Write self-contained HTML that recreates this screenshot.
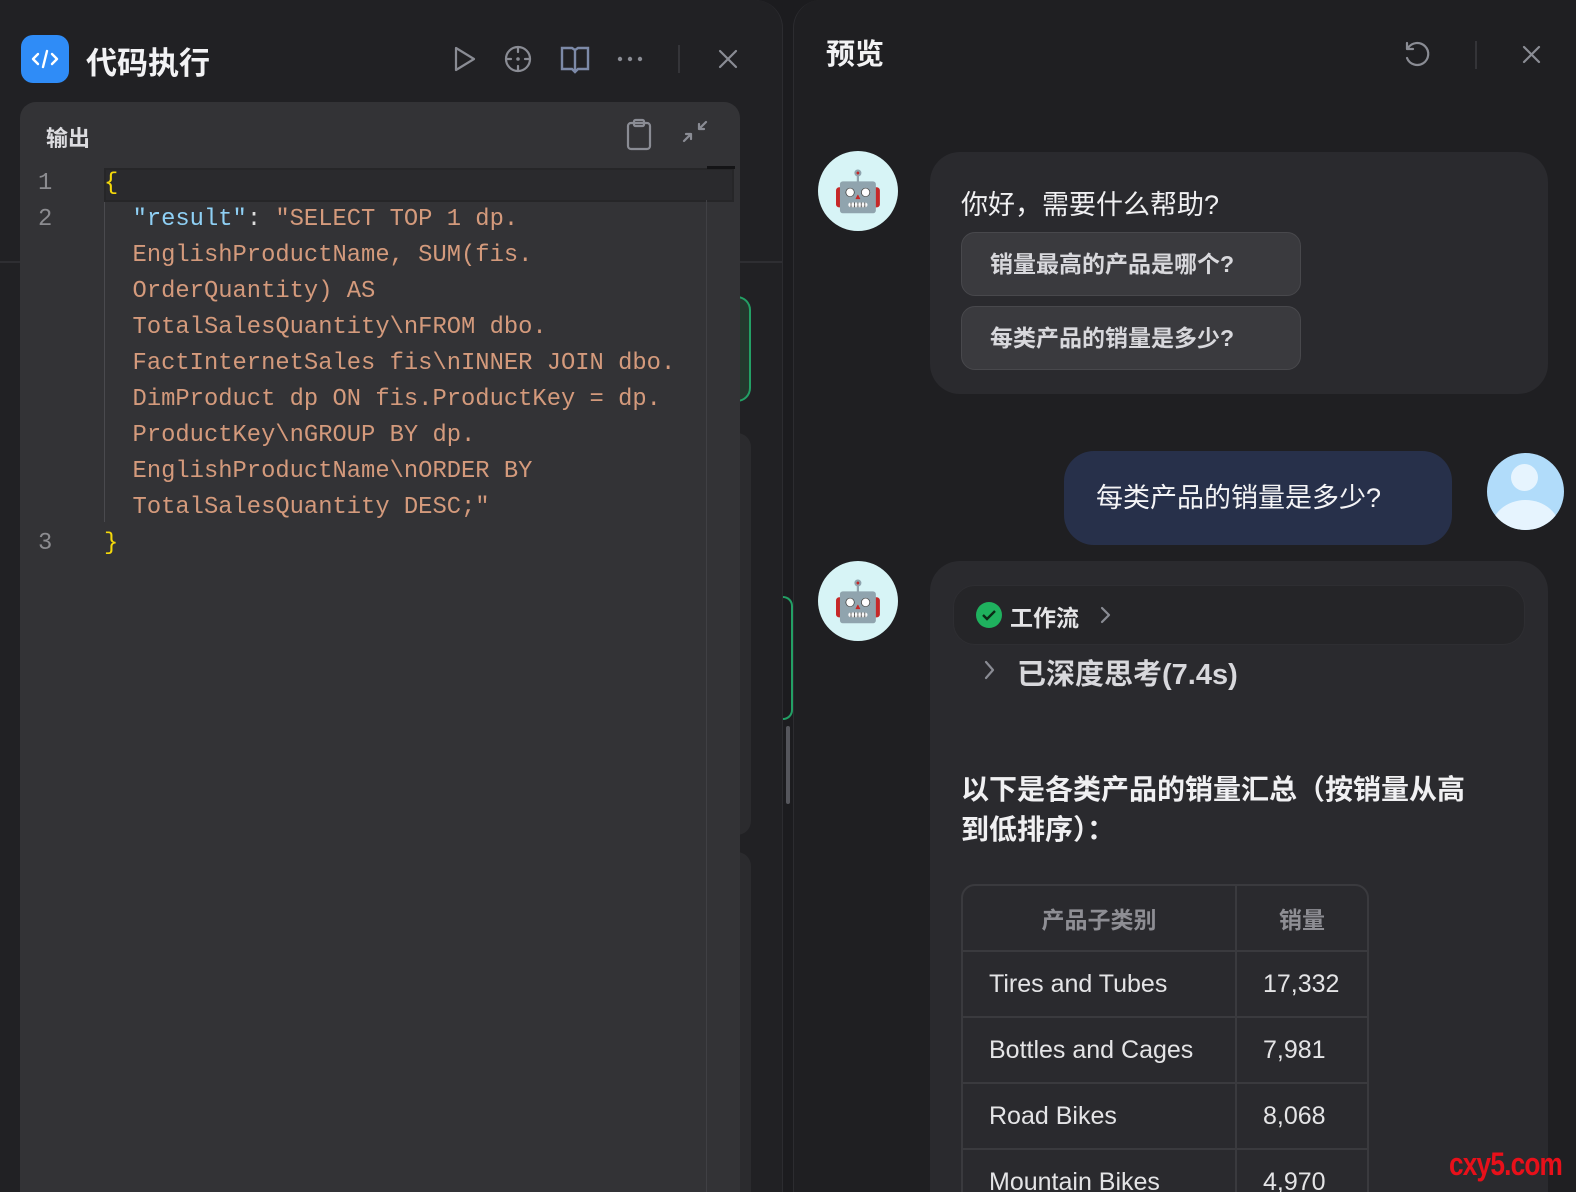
<!DOCTYPE html>
<html style="overflow:hidden;width:1576px;height:1192px"><head><meta charset="utf-8"><style>
*{margin:0;padding:0;box-sizing:border-box}
body{width:1576px;height:1192px;background:#1c1c1f;overflow:hidden;position:relative;font-family:"Liberation Sans","Noto Sans CJK SC",sans-serif;color:#e8e8ea}
.abs{position:absolute}
.left{left:0;top:0;width:783px;height:1192px;background:#212124;border-top-right-radius:28px;border-right:1px solid #2c2c30}
.right{left:793px;top:0;width:783px;height:1192px;background:#1f1f22;border-top-left-radius:28px;border-left:1px solid #2c2c30}
.mono{font-family:"Liberation Mono",monospace;font-size:23.8px;line-height:36px;white-space:pre}
.str{color:#d49a7c}
.ico{stroke:#8a8c94;fill:none;stroke-width:2.2;stroke-linecap:round;stroke-linejoin:round}
.bub{background:#2a2a2e;border-radius:30px}
.chip{background:#3a3a3e;border:1px solid #48484c;border-radius:14px;font-size:23px;font-weight:bold;color:#d8d8dc;padding-left:28px;line-height:62px}
.av{width:80px;height:80px;border-radius:50%;background:#d7f4f6;display:flex;align-items:center;justify-content:center;font-size:40px}
table{border-collapse:separate;border-spacing:0}
td,th{border-right:2px solid #3a3a3e;border-bottom:2px solid #3a3a3e;height:66px;font-size:25px;text-align:left;padding-left:26px;font-weight:normal;color:#e4e4e6}
</style></head><body>
<div class="abs left"></div>
<div class="abs" style="left:0;top:261px;width:20px;height:2px;background:#2e2e32"></div>
<div class="abs" style="left:740px;top:261px;width:42px;height:2px;background:#2e2e32"></div>
<div class="abs" style="left:736px;top:296px;width:15px;height:106px;border:2px solid #23a065;border-left:none;border-radius:0 14px 14px 0;background:#24382d"></div>
<div class="abs" style="left:736px;top:433px;width:15px;height:402px;background:#2b2b2e;border-radius:0 14px 14px 0"></div>
<div class="abs" style="left:736px;top:852px;width:15px;height:340px;background:#2b2b2e;border-radius:0 14px 0 0"></div>
<div class="abs" style="left:21px;top:35px;width:48px;height:48px;border-radius:12px;background:#2f8cf7">
<svg width="48" height="48" viewBox="0 0 48 48"><path d="M17 19l-5 5 5 5M31 19l5 5-5 5M26 16l-4 16" stroke="#fff" stroke-width="2.4" fill="none" stroke-linecap="round" stroke-linejoin="round"/></svg></div>
<div class="abs" style="left:86px;top:38px;font-size:31px;font-weight:bold;color:#f2f2f4">代码执行</div>
<svg class="abs" style="left:448px;top:42px" width="300" height="34" viewBox="0 0 300 34">
<path class="ico" d="M8 6l18 11-18 11z"/>
<circle class="ico" cx="70" cy="17" r="12"/><path class="ico" d="M70 5v5M70 24v5M58 17h5M77 17h5"/><circle cx="70" cy="17" r="1.8" fill="#8a8c94"/>
<path d="M114 6h10l3 2 3-2h10v21h-10l-3 3-3-3h-10zM127 8v22" stroke="#7d8aa8" stroke-width="2.4" fill="none"/>
<circle cx="172" cy="17" r="2.2" fill="#8a8c94"/><circle cx="182" cy="17" r="2.2" fill="#8a8c94"/><circle cx="192" cy="17" r="2.2" fill="#8a8c94"/>
<path d="M231 3v28" stroke="#3c3c40" stroke-width="1.5"/>
<path class="ico" d="M272 9l16 16M288 9l-16 16"/>
</svg>
<div class="abs" style="left:20px;top:102px;width:720px;height:1090px;background:#333336;border-radius:16px 16px 0 0"></div>
<div class="abs" style="left:46px;top:121px;font-size:22px;font-weight:bold;color:#dcdce0">输出</div>
<svg class="abs" style="left:620px;top:116px" width="95" height="36" viewBox="0 0 95 36">
<rect class="ico" x="8" y="7" width="22" height="26" rx="3"/><rect class="ico" x="14" y="4" width="10" height="6" rx="1.5" fill="#333336"/>
<path class="ico" d="M64 25l7-7M71 18h-5M71 18v5M86 6l-7 7M79 13h5M79 13V8"/>
</svg>
<div class="abs" style="left:104px;top:168px;width:630px;height:34px;background:#2a2a2d;border:2px solid #262628"></div>
<div class="abs" style="left:707px;top:166px;width:28px;height:3px;background:#141416"></div>
<div class="abs" style="left:706px;top:200px;width:1px;height:992px;background:#404044"></div>
<div class="abs" style="left:104px;top:202px;width:1px;height:320px;background:#4a4a4e"></div>
<div class="abs mono" style="left:38px;top:166px;color:#8c8c90">1
2








3</div>
<div class="abs mono" style="left:104px;top:166px;color:#ddd"><span style="color:#f5d90a">{</span>
  <span style="color:#8fd0f5">"result"</span>: <span class="str">"SELECT TOP 1 dp.</span>
<span class="str">  EnglishProductName, SUM(fis.</span>
<span class="str">  OrderQuantity) AS</span>
<span class="str">  TotalSalesQuantity\nFROM dbo.</span>
<span class="str">  FactInternetSales fis\nINNER JOIN dbo.</span>
<span class="str">  DimProduct dp ON fis.ProductKey = dp.</span>
<span class="str">  ProductKey\nGROUP BY dp.</span>
<span class="str">  EnglishProductName\nORDER BY</span>
<span class="str">  TotalSalesQuantity DESC;"</span>
<span style="color:#f5d90a">}</span></div>
<div class="abs right"></div>
<div class="abs" style="left:783px;top:596px;width:10px;height:124px;border:2px solid #23a065;border-left:none;border-radius:0 12px 12px 0"></div>
<div class="abs" style="left:786px;top:726px;width:4px;height:78px;background:#55565c;border-radius:2px"></div>
<div class="abs" style="left:826px;top:31px;font-size:29px;font-weight:bold;color:#f2f2f4">预览</div>
<svg class="abs" style="left:1400px;top:38px" width="150" height="34" viewBox="0 0 150 34">
<path class="ico" d="M8 10a11 11 0 1 1-1 10M7 5v6h6"/>
<path d="M76 3v28" stroke="#3c3c40" stroke-width="1.5"/>
<path class="ico" d="M124 9l15 15M139 9l-15 15"/>
</svg>
<div class="abs av" style="left:818px;top:151px">🤖</div>
<div class="abs bub" style="left:930px;top:152px;width:618px;height:242px"></div>
<div class="abs" style="left:961px;top:183px;font-size:27px;color:#f0f0f2">你好，需要什么帮助?</div>
<div class="abs chip" style="left:961px;top:232px;width:340px;height:64px">销量最高的产品是哪个?</div>
<div class="abs chip" style="left:961px;top:306px;width:340px;height:64px">每类产品的销量是多少?</div>
<div class="abs" style="left:1064px;top:451px;width:388px;height:94px;background:#27304a;border-radius:30px;font-size:27px;color:#f4f4f6;line-height:94px;padding-left:32px">每类产品的销量是多少?</div>
<div class="abs" style="left:1487px;top:453px;width:77px;height:77px;border-radius:50%;background:#b1dcfa;overflow:hidden">
<div class="abs" style="left:24px;top:11px;width:27px;height:27px;border-radius:50%;background:#e6f4fe"></div>
<div class="abs" style="left:4px;top:47px;width:69px;height:60px;border-radius:50%;background:#e6f4fe"></div></div>
<div class="abs av" style="left:818px;top:561px">🤖</div>
<div class="abs bub" style="left:930px;top:561px;width:618px;height:631px;border-radius:30px 30px 0 0"></div>
<div class="abs" style="left:953px;top:585px;width:572px;height:60px;border-radius:22px;background:#252528;border:1px solid #2e2e32"></div>
<div class="abs" style="left:976px;top:602px;width:26px;height:26px;border-radius:50%;background:#1fb15e">
<svg width="26" height="26"><path d="M7 13l4 4 8-8" stroke="#0b2a16" stroke-width="2.4" fill="none"/></svg></div>
<div class="abs" style="left:1010px;top:599px;font-size:23px;font-weight:bold;color:#e4e4e6">工作流</div>
<svg class="abs" style="left:1096px;top:604px" width="20" height="22"><path class="ico" d="M6 4l7 7-7 7" stroke-width="2"/></svg>
<svg class="abs" style="left:980px;top:658px" width="20" height="24"><path class="ico" d="M6 4l7 8-7 8" stroke-width="2"/></svg>
<div class="abs" style="left:1017px;top:651px;font-size:29px;font-weight:bold;color:#d8d8dc">已深度思考(7.4s)</div>
<div class="abs" style="left:961px;top:770px;width:520px;font-size:28px;line-height:40px;font-weight:bold;color:#f0f0f2">以下是各类产品的销量汇总（按销量从高到低排序）：</div>
<div class="abs" style="left:961px;top:884px;width:408px;border:2px solid #3a3a3e;border-radius:14px 14px 0 0;overflow:hidden">
<table style="width:404px">
<tr><th style="width:274px;text-align:center;padding:0;color:#8e8e94;font-size:23px;font-weight:bold;height:64px">产品子类别</th><th style="text-align:center;padding:0;color:#8e8e94;font-size:23px;font-weight:bold;border-right:none">销量</th></tr>
<tr><td>Tires and Tubes</td><td style="border-right:none">17,332</td></tr>
<tr><td>Bottles and Cages</td><td style="border-right:none">7,981</td></tr>
<tr><td>Road Bikes</td><td style="border-right:none">8,068</td></tr>
<tr><td>Mountain Bikes</td><td style="border-right:none">4,970</td></tr>
</table></div>
<div class="abs" style="left:1449px;top:1146px;font-size:32px;font-weight:bold;color:#e8101a;letter-spacing:-1px;transform:scaleX(0.82);transform-origin:left top;white-space:nowrap">cxy5.com</div>
</body></html>
